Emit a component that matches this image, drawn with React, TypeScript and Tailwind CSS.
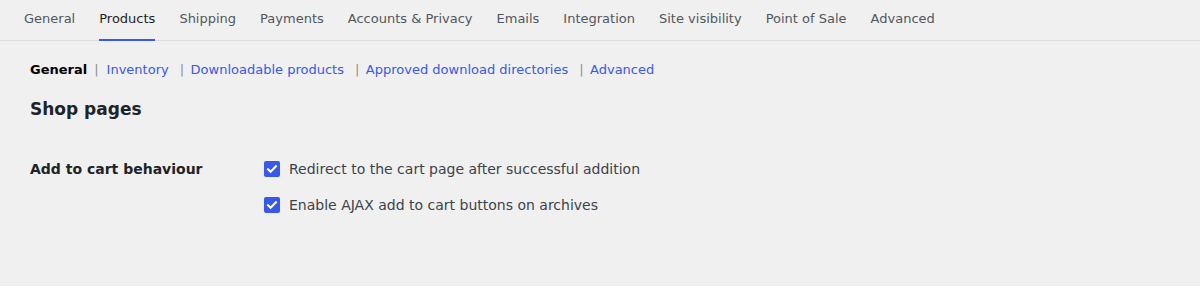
const tabs = [
  'General',
  'Products',
  'Shipping',
  'Payments',
  'Accounts & Privacy',
  'Emails',
  'Integration',
  'Site visibility',
  'Point of Sale',
  'Advanced',
];

const sections = ['Inventory', 'Downloadable products', 'Approved download directories', 'Advanced'];

function Checkbox({ label }: { label: string }) {
  return (
    <label className="flex items-center gap-[9px] h-4">
      <span className="w-4 h-4 rounded-[2px] bg-[#3858e9] flex items-center justify-center shrink-0">
        <svg viewBox="0 0 16 16" className="w-4 h-4" fill="none">
          <path d="M4 8.2l2.6 2.6L12 5.2" stroke="#fff" strokeWidth="2" strokeLinecap="square" />
        </svg>
      </span>
      <span className="text-[14px] text-[#3c434a]">{label}</span>
    </label>
  );
}

export default function App() {
  return (
    <div className="bg-[#f0f0f0] h-[286px] font-['DejaVu_Sans',sans-serif]">
      <nav className="flex gap-6 px-6 h-[41px] border-b border-[#dcdcde]">
        {tabs.map((t) => (
          <a
            key={t}
            className={
              t === 'Products'
                ? 'h-[41px] -mb-px pb-px flex items-center border-b-2 border-[#3858e9] text-[13px] text-[#1e1e1e]'
                : 'h-[41px] -mb-px pb-px flex items-center border-b-2 border-transparent text-[13px] text-[#50575e]'
            }
          >
            {t}
          </a>
        ))}
      </nav>

      <div className="px-[30px]">
        <ul className="flex items-center text-[13px] mt-[20px] h-[18px]">
          <li className="font-bold text-black">General</li>
          {sections.map((s, i) => (
            <li key={s} className="flex items-center">
              <span className={i === 0 ? 'text-[#8c8f94] ml-[7px] mr-[8px]' : 'text-[#8c8f94] ml-[11px] mr-[6.5px]'}>|</span>
              <a className="text-[#3858e9]">{s}</a>
            </li>
          ))}
        </ul>

        <h2 className="text-[17px] font-bold text-[#1d2327] mt-[19px] leading-[22px]">Shop pages</h2>

        <div className="flex mt-[41px]">
          <div className="w-[234px] text-[14px] font-bold text-[#1d2327] h-4 flex items-center">Add to cart behaviour</div>
          <div className="flex flex-col gap-5">
            <Checkbox label="Redirect to the cart page after successful addition" />
            <Checkbox label="Enable AJAX add to cart buttons on archives" />
          </div>
        </div>
      </div>
    </div>
  );
}
